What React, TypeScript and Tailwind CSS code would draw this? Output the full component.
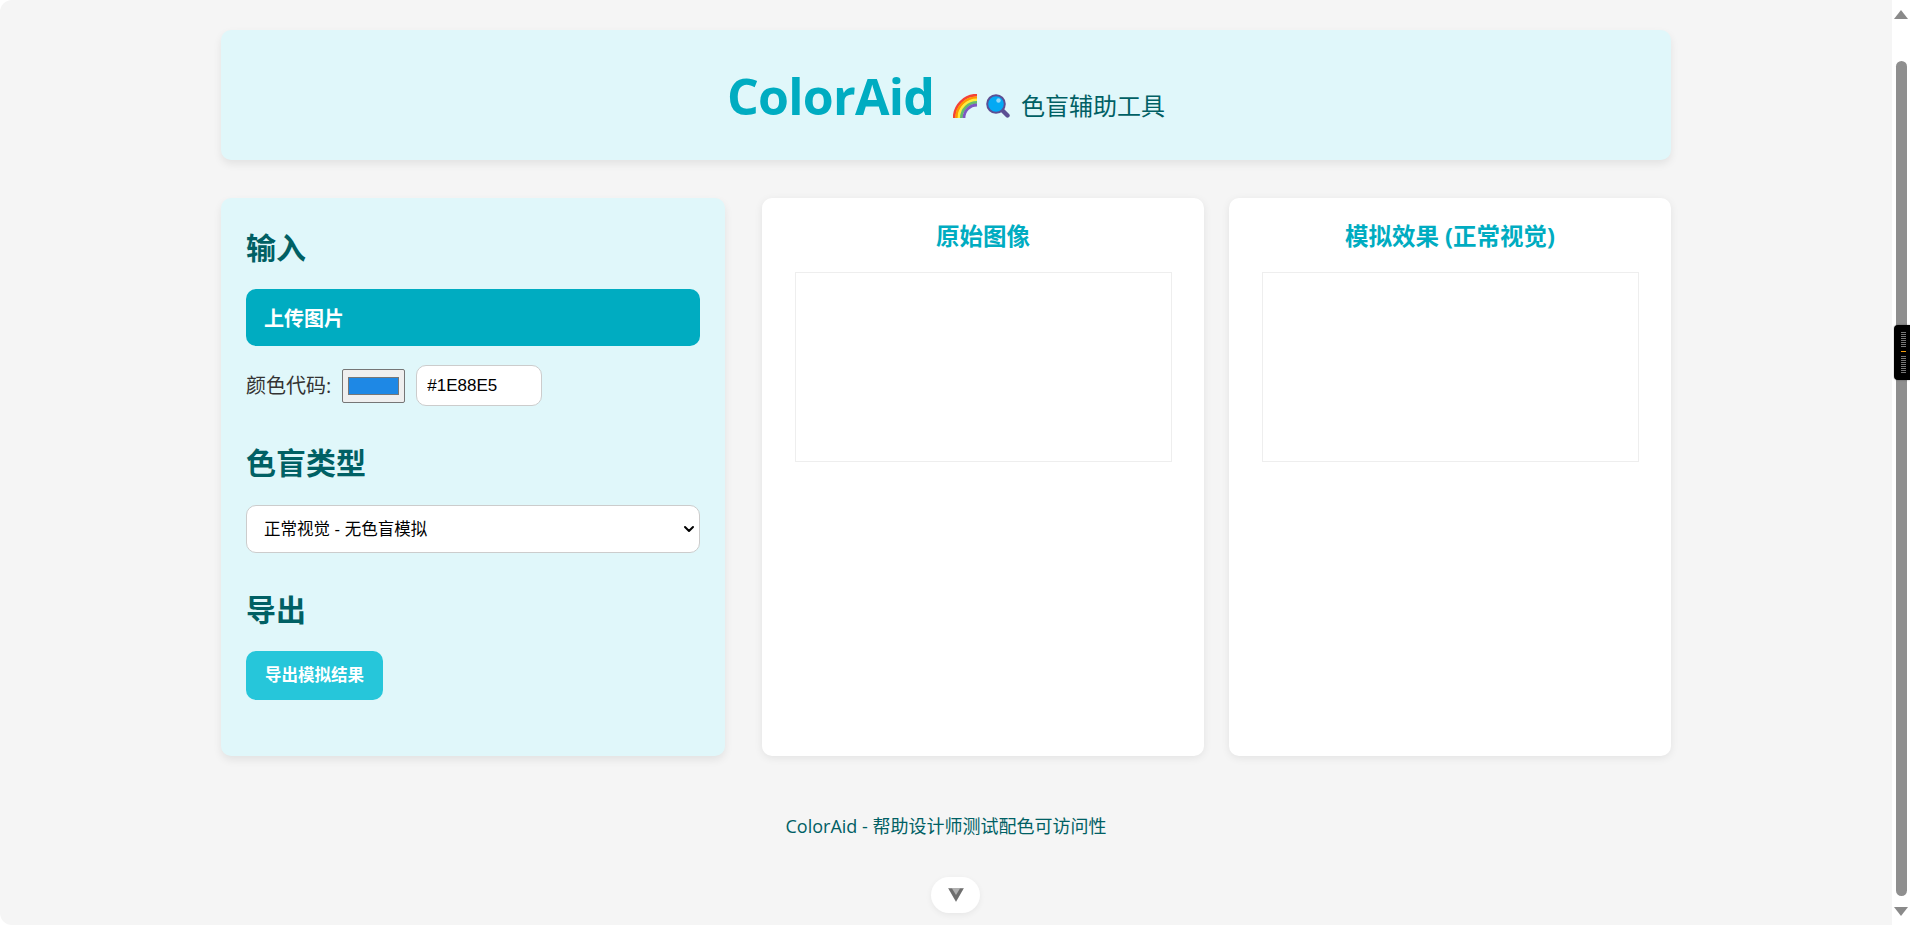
import { ChevronDown } from "lucide-react"

const cjk = "font-['Segoe_UI','Open_Sans','Noto_Sans_CJK_SC',sans-serif]"

const rainbow = [
  { r: 22.8, color: "#f44336" },
  { r: 20.4, color: "#ff9800" },
  { r: 18, color: "#ffeb3b" },
  { r: 15.6, color: "#66bb6a" },
  { r: 13, color: "#7e57c2" },
]

function RainbowIcon() {
  return (
    <svg width="24" height="24" viewBox="0 0 24 24" fill="none">
      {rainbow.map((band) => (
        <path
          key={band.color}
          d={`M${24 - band.r} 24A${band.r} ${band.r} 0 0 1 24 ${24 - band.r}`}
          stroke={band.color}
          strokeWidth="2.8"
        />
      ))}
    </svg>
  )
}

function MagnifierIcon() {
  return (
    <svg width="24" height="24" viewBox="0 0 24 24">
      <path d="M15.5 15.5l6 6" stroke="#5c4f93" strokeWidth="4.4" strokeLinecap="round" />
      <circle cx="10" cy="10" r="8.8" fill="#03a9f4" stroke="#5c4f93" strokeWidth="2" />
      <circle cx="12.5" cy="6.5" r="2.2" fill="#8fd8fb" />
    </svg>
  )
}

function Preview({ title }: { title: string }) {
  return (
    <div className="flex-1 rounded-[10px] bg-white px-[32.5px] pt-[23px] shadow-[0_2px_8px_rgba(0,0,0,0.08)]">
      <h3 className="mb-[21px] text-center text-[23.5px] font-bold leading-[30px] text-[#00acc1]">{title}</h3>
      <div className="h-[190px] border border-[#eeeeee]" />
    </div>
  )
}

export default function App() {
  return (
    <div className={`relative flex h-[925px] overflow-hidden bg-white ${cjk}`}>
      <main className="h-full flex-1 rounded-l-[12px] bg-[#f5f5f5] pt-[30px]">
        <div className="mx-auto w-[1450px]">
          <header className="flex h-[130px] items-center justify-center gap-[19px] rounded-[10px] bg-[#e0f7fa] shadow-[0_4px_8px_rgba(0,0,0,0.08)]">
            <h1 className="mt-[2px] text-[50px] font-bold leading-none tracking-[-0.75px] text-[#00acc1]">ColorAid</h1>
            <div className="mt-[21px] flex items-center gap-[11px] text-[24px] leading-none text-[#006064]">
              <span className="flex items-center gap-[9px]">
                <RainbowIcon />
                <MagnifierIcon />
              </span>
              <span>色盲辅助工具</span>
            </div>
          </header>

          <div className="mt-[38px] flex h-[558px] gap-[37px]">
            <section className="w-[504px] rounded-[10px] bg-[#e0f7fa] px-[25px] pt-[30px] shadow-[0_4px_8px_rgba(0,0,0,0.08)]">
              <h2 className="text-[30px] font-bold leading-[40px] text-[#006064]">输入</h2>
              <div className="mt-[21px] flex h-[57px] items-center rounded-[10px] bg-[#00acc1] px-[18px] pt-[2px] text-[20px] font-bold text-white">
                上传图片
              </div>
              <div className="mt-[19px] flex items-center">
                <span className="text-[20px] text-[#333333]">颜色代码:</span>
                <input
                  type="color"
                  defaultValue="#1e88e5"
                  className="ml-[11px] h-[34px] w-[63px] cursor-pointer rounded-[2px] border border-[#767676] bg-[#efefef] p-[3px]"
                />
                <input
                  type="text"
                  defaultValue="#1E88E5"
                  className="ml-[11px] h-[41px] w-[126px] rounded-[10px] border border-[#cccccc] bg-white px-[10px] font-['Liberation_Sans',sans-serif] text-[17px] text-black"
                />
              </div>
              <h2 className="mt-[37px] text-[30px] font-bold leading-[40px] text-[#006064]">色盲类型</h2>
              <div className="relative mt-[22px]">
                <select className="h-[48px] w-full appearance-none rounded-[10px] border border-[#cccccc] bg-white px-[17px] font-['Liberation_Sans','Noto_Sans_CJK_SC',sans-serif] text-[16.5px] text-black">
                  <option>正常视觉 - 无色盲模拟</option>
                </select>
                <ChevronDown className="pointer-events-none absolute right-[3px] top-[16px] h-4 w-4 text-black" strokeWidth={3} />
              </div>
              <h2 className="mt-[37px] text-[30px] font-bold leading-[40px] text-[#006064]">导出</h2>
              <button className="mt-[21px] h-[49px] w-[137px] rounded-[10px] bg-[#26c6da] text-[16.5px] font-bold text-white">
                导出模拟结果
              </button>
            </section>

            <div className="flex flex-1 gap-[25px]">
              <Preview title="原始图像" />
              <Preview title="模拟效果 (正常视觉)" />
            </div>
          </div>

          <footer className="mt-[58px] text-center text-[18px] leading-[24px] text-[#006064]">
            ColorAid - 帮助设计师测试配色可访问性
          </footer>
        </div>
      </main>

      {/* browser scrollbar */}
      <aside className="flex w-[18px] flex-col items-center rounded-r-[12px] bg-white">
        <div className="mt-[10px] h-0 w-0 border-x-[7px] border-b-[9px] border-x-transparent border-b-[#8a8a8a]" />
        <div className="mt-[42px] h-[835px] w-[11px] rounded-full bg-[#8f8f8f]" />
        <div className="mt-[11px] h-0 w-0 border-x-[7px] border-t-[9px] border-x-transparent border-t-[#8a8a8a]" />
      </aside>

      {/* extension handle over the scrollbar */}
      <div className="absolute right-0 top-[325px] flex h-[55px] w-[16px] flex-col items-end justify-center gap-[1px] rounded-l-[4px] bg-black pr-[4px] shadow-[0_0_2px_rgba(0,0,0,0.4)]">
        {[0, 1, 2, 3, 4, 5, 6, 7].map((i) => (
          <div key={i} className="h-[1px] w-[5px] bg-[#777777]" />
        ))}
        <div className="my-[3px] h-[1px] w-[5px] bg-[#f59e0b]" />
        {[0, 1, 2, 3, 4, 5, 6, 7, 8].map((i) => (
          <div key={i} className="h-[1px] w-[5px] bg-[#777777]" />
        ))}
      </div>

      {/* floating scroll-down pill */}
      <button className="absolute left-[931px] top-[877px] flex h-[36px] w-[49px] items-center justify-center rounded-full bg-white shadow-[0_2px_6px_rgba(0,0,0,0.06)]">
        <svg width="18" height="16" viewBox="0 0 18 16" className="blur-[0.4px]">
          <path d="M1 1h16L9 15z" fill="#b0b0b0" />
          <path d="M1.5 1.5L9 14.5l7.5-13h-3.5L9 8 5 1.5z" fill="#6e6e6e" />
        </svg>
      </button>
    </div>
  )
}
